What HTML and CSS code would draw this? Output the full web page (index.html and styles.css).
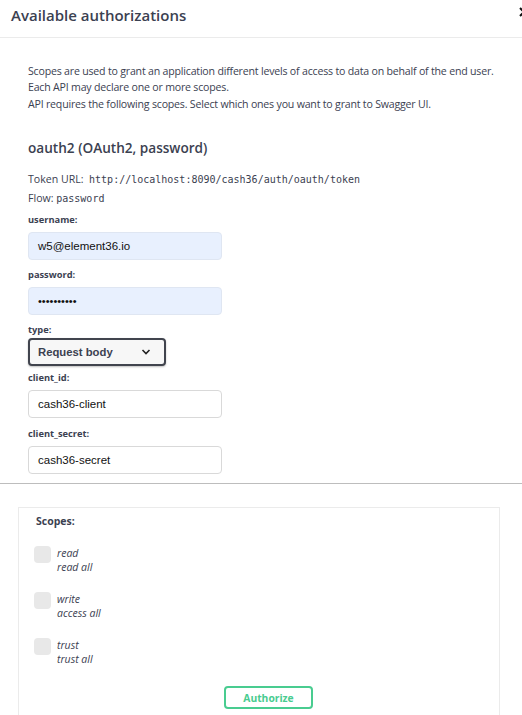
FILE: index.html
```html
<!DOCTYPE html>
<html lang="en">
<head>
<meta charset="utf-8">
<title>Available authorizations</title>
<link rel="stylesheet" href="styles.css">
</head>
<body>
<div class="modal">
  <header class="modal-head">
    <h3 class="modal-title">Available authorizations</h3>
    <span class="close">
      <svg width="10" height="10" viewBox="0 0 10 10"><path d="M1 1 L9 9 M9 1 L1 9" stroke="#111" stroke-width="2"/></svg>
    </span>
  </header>
  <div class="content">
    <p class="desc">Scopes are used to grant an application different levels of access to data on behalf of the end user.<br>Each API may declare one or more scopes.</p>
    <p class="desc second">API requires the following scopes. Select which ones you want to grant to Swagger UI.</p>
    <h4 class="scheme">oauth2 (OAuth2, password)</h4>
    <p class="meta token">Token URL:&nbsp; <code>http://localhost:8090/cash36/auth/oauth/token</code></p>
    <p class="meta">Flow: <code>password</code></p>

    <div class="field first">
      <label class="lbl">username:</label>
      <div class="input autofill">w5@element36.io</div>
    </div>
    <div class="field">
      <label class="lbl">password:</label>
      <div class="input autofill dots">&#8226;&#8226;&#8226;&#8226;&#8226;&#8226;&#8226;&#8226;&#8226;&#8226;</div>
    </div>
    <div class="field">
      <label class="lbl">type:</label>
      <div class="select">
        <span>Request body</span>
        <svg width="10" height="6" viewBox="0 0 10 6"><path d="M1.5 1 L5 4.5 L8.5 1" fill="none" stroke="#222" stroke-width="1.6"/></svg>
      </div>
    </div>
    <div class="field after-select">
      <label class="lbl">client_id:</label>
      <div class="input">cash36-client</div>
    </div>
    <div class="field last">
      <label class="lbl">client_secret:</label>
      <div class="input">cash36-secret</div>
    </div>
  </div>
  <div class="divider"></div>
  <div class="scopes-wrap">
    <div class="scopes-box">
      <h2 class="scopes-title">Scopes:</h2>
      <div class="scope">
        <span class="check"></span>
        <div class="scope-text"><div>read</div><div>read all</div></div>
      </div>
      <div class="scope">
        <span class="check"></span>
        <div class="scope-text"><div>write</div><div>access all</div></div>
      </div>
      <div class="scope">
        <span class="check"></span>
        <div class="scope-text"><div>trust</div><div>trust all</div></div>
      </div>
      <div class="btn-row">
        <button class="btn-authorize">Authorize</button>
      </div>
    </div>
  </div>
</div>
</body>
</html>
```

FILE: styles.css
```css
html, body {
  margin: 0;
  padding: 0;
  background: #fff;
  overflow: hidden;
}
body {
  width: 522px;
  height: 715px;
  font-family: "Open Sans", "Noto Sans", sans-serif;
  color: #3b4151;
}
.modal {
  width: 522px;
}
.modal-head {
  height: 37px;
  border-bottom: 1px solid #ebebeb;
  display: flex;
  align-items: center;
  justify-content: space-between;
  padding-left: 11px;
}
.modal-title {
  margin: 0;
  font-size: 15px;
  font-weight: 600;
  color: #3b4151;
  line-height: 20px;
  margin-top: -8px;
}
.close {
  width: 3px;
  height: 10px;
  overflow: hidden;
  margin-top: -13px;
  display: block;
}
.close svg {
  display: block;
}
.content {
  padding: 25px 16px 0 28px;
}
.desc {
  margin: 0;
  font-size: 10.6px;
  letter-spacing: -0.2px;
  line-height: 16px;
  white-space: nowrap;
}
.desc.second {
  margin-top: 1px;
}
.scheme {
  margin: 26px 0 0 0;
  font-size: 13.6px;
  font-weight: 600;
  line-height: 20px;
}
.meta {
  margin: 0;
  font-size: 10.6px;
  line-height: 18px;
}
.meta.token {
  margin-top: 12px;
}
code {
  font-family: "DejaVu Sans Mono", monospace;
  font-size: 10px;
}
.field {
  margin-top: 8px;
}
.field.first {
  margin-top: 5px;
}
.field.last {
  margin-top: 9px;
}
.lbl {
  display: block;
  font-size: 9.3px;
  font-weight: 700;
  line-height: 14px;
}
.input {
  margin-top: 5px;
  width: 194px;
  height: 28px;
  box-sizing: border-box;
  border: 1px solid #d9d9d9;
  border-radius: 4px;
  background: #fff;
  display: flex;
  align-items: center;
  padding-left: 9px;
  font-family: "Liberation Sans", Arial, sans-serif;
  font-size: 11.5px;
  color: #111;
}
.input.autofill {
  background: #e8f0fe;
  border-color: #dfe6f2;
}
.input.dots {
  font-size: 11px;
  letter-spacing: 0;
}
.select {
  margin-top: 1px;
  width: 138px;
  height: 28px;
  box-sizing: border-box;
  border: 2px solid #41444e;
  border-radius: 4px;
  background: #f7f7f7;
  display: flex;
  align-items: center;
  justify-content: space-between;
  padding-left: 8px;
  padding-right: 13px;
  font-family: "Liberation Sans", Arial, sans-serif;
  font-weight: 700;
  font-size: 11.3px;
  color: #3b4151;
  box-shadow: 0 1px 2px rgba(0,0,0,0.25);
}
.field.after-select {
  margin-top: 5px;
}
.divider {
  margin-top: 9px;
  height: 1px;
  background: #bdbdbd;
}
.scopes-wrap {
  padding: 23px 22px 0 18px;
}
.scopes-box {
  border: 1px solid #ebebeb;
  border-bottom: none;
  height: 220px;
  padding: 5px 16px 0 15px;
}
.scopes-title {
  margin: 0;
  font-size: 10.5px;
  font-weight: 700;
  line-height: 16px;
  padding-left: 2px;
}
.scope {
  display: flex;
  align-items: flex-start;
  gap: 6px;
  margin-top: 17px;
}
.scope + .scope {
  margin-top: 18px;
}
.check {
  width: 17px;
  height: 17px;
  border-radius: 4px;
  background: #e8e8e8;
  flex: none;
}
.scope-text {
  font-size: 10.5px;
  font-style: italic;
  line-height: 14px;
  color: #3b4151;
}
.btn-row {
  display: flex;
  justify-content: center;
  margin-top: 20px;
  padding-left: 20px;
}
.btn-authorize {
  width: 89px;
  height: 23px;
  box-sizing: border-box;
  border: 2px solid #49cc90;
  border-radius: 4px;
  background: #fff;
  color: #49cc90;
  font-family: "Open Sans", "Noto Sans", sans-serif;
  font-weight: 700;
  font-size: 10.3px;
  padding: 0;
}
```
